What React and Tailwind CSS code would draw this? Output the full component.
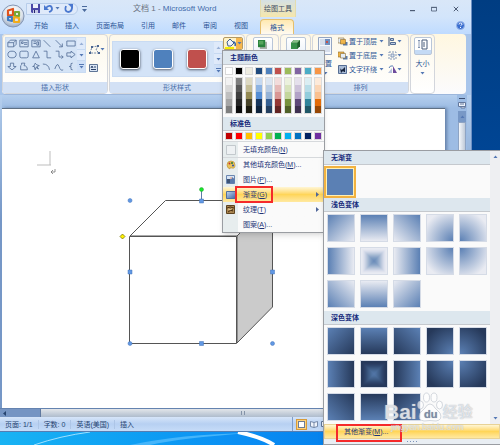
import React, { useState } from "react";
import clsx from "clsx";

const TABS = ["开始", "插入", "页面布局", "引用", "邮件", "审阅", "视图"];

// Base color followed by its five tints / shades
const THEME_COLORS = [
  ["#ffffff", "#f2f2f2", "#d8d8d8", "#bfbfbf", "#a5a5a5", "#7f7f7f"],
  ["#000000", "#7f7f7f", "#595959", "#3f3f3f", "#262626", "#0c0c0c"],
  ["#eeece1", "#ddd9c3", "#c4bd97", "#938953", "#494429", "#1d1b10"],
  ["#1f497d", "#c6d9f0", "#8db3e2", "#548dd4", "#17365d", "#0f243e"],
  ["#4f81bd", "#dbe5f1", "#b8cce4", "#95b3d7", "#366092", "#244061"],
  ["#c0504d", "#f2dcdb", "#e5b9b7", "#d99694", "#953734", "#632423"],
  ["#9bbb59", "#ebf1dd", "#d7e3bc", "#c3d69b", "#76923c", "#4f6128"],
  ["#8064a2", "#e5e0ec", "#ccc1d9", "#b2a2c7", "#5f497a", "#3f3151"],
  ["#4bacc6", "#dbeef3", "#b7dde8", "#92cddc", "#31859b", "#205867"],
  ["#f79646", "#fdeada", "#fbd5b5", "#fac08f", "#e36c09", "#974806"],
];

const STANDARD_COLORS = [
  "#c00000", "#ff0000", "#ffc000", "#ffff00", "#92d050",
  "#00b050", "#00b0f0", "#0070c0", "#002060", "#7030a0",
];

const LINEAR = [
  "bg-[linear-gradient(to_bottom_right,#5b80b4,var(--end))]",
  "bg-[linear-gradient(to_bottom,#5b80b4,var(--end))]",
  "bg-[linear-gradient(to_bottom_left,#5b80b4,var(--end))]",
  "bg-[linear-gradient(to_right,#5b80b4,var(--end))]",
  "center",
  "bg-[linear-gradient(to_left,#5b80b4,var(--end))]",
  "bg-[linear-gradient(to_top_right,#5b80b4,var(--end))]",
  "bg-[linear-gradient(to_top,#5b80b4,var(--end))]",
  "bg-[linear-gradient(to_top_left,#5b80b4,var(--end))]",
];

const CORNERS = [
  "bg-[radial-gradient(circle_at_bottom_right,#5b80b4,var(--end)_85%)]",
  "bg-[radial-gradient(circle_at_bottom_left,#5b80b4,var(--end)_85%)]",
  "bg-[radial-gradient(circle_at_top_right,#5b80b4,var(--end)_85%)]",
  "bg-[radial-gradient(circle_at_top_left,#5b80b4,var(--end)_85%)]",
];

function Caret({ className }) {
  return (
    <svg viewBox="0 0 5 3" className={clsx("h-[3px] w-[5px] shrink-0", className)}>
      <path d="M.5 0h4L2.5 2.5z" fill="#5478b4" />
    </svg>
  );
}

function OfficeButton() {
  return (
    <button aria-label="Office" className="mt-1 ml-px size-6 shrink-0">
      <svg viewBox="0 0 24 24" className="size-6">
        <defs>
          <radialGradient id="orb" cx="50%" cy="30%" r="75%">
            <stop offset="0" stopColor="#ffffff" />
            <stop offset=".6" stopColor="#dbe2ea" />
            <stop offset="1" stopColor="#8c9db8" />
          </radialGradient>
        </defs>
        <circle cx="12" cy="12" r="11" fill="url(#orb)" stroke="#8395b3" />
        <g fill="none" strokeWidth="2.2" strokeLinejoin="round">
          <path d="M7 6.500l5-1.500v6l-5 .5z" stroke="#e0531c" />
          <path d="M14 8h4v4h-4z" stroke="#77a833" />
          <path d="M7 13h4v4l-4-1z" stroke="#3f7ac0" />
          <path d="M13 13l5 1v4h-5z" stroke="#f1ac1b" />
        </g>
      </svg>
    </button>
  );
}

function QuickAccess() {
  return (
    <div className="flex h-3 w-[52px] items-center gap-1 rounded-r-full border border-[#b7cdea] bg-[#dfeafa] pl-1">
      <button aria-label="保存">
        <svg viewBox="0 0 9 9" className="size-[9px]">
          <path d="M0 0h9v9H1L0 8z" fill="#4b49a8" />
          <path d="M2 0h5v4H2z" fill="#eef2fb" />
          <path d="M2 6h5v3H2z" fill="#c5c9e6" />
          <path d="M3 6h1v3H3z" fill="#25256c" />
        </svg>
      </button>
      <button aria-label="撤消" className="flex items-center gap-[2px]">
        <svg viewBox="0 0 9 9" className="size-[9px]">
          <path d="M2 4c2-3 6-3 6 1q0 2-3 3" fill="none" stroke="#4a78cf" strokeWidth="1.8" />
          <path d="M0 1v5h5z" fill="#4a78cf" />
        </svg>
        <Caret />
      </button>
      <button aria-label="恢复">
        <svg viewBox="0 0 9 9" className="size-[9px]">
          <path d="M2 2q-2 5 2 6q4 0 4-5" fill="none" stroke="#4a78cf" strokeWidth="1.8" />
          <path d="M4 0h5v5z" fill="#4a78cf" />
        </svg>
      </button>
    </div>
  );
}

function Header() {
  return (
    <header className="flex h-[34px] bg-linear-to-b from-[#d9e7f8] via-[#d3e5fb] to-[#bfdbff]">
      <OfficeButton />
      <div className="flex min-w-0 flex-1 flex-col pl-px">
        <div className="flex h-[17px] items-center">
          <QuickAccess />
          <button aria-label="自定义快速访问工具栏" className="ml-1">
            <svg viewBox="0 0 5 6" className="h-[6px] w-[5px]">
              <path d="M0 0h5v1H0zM0 3h5L2.5 6z" fill="#4b6a9c" />
            </svg>
          </button>
          <h1 className="ml-[46px] w-[127px] text-[8px] leading-none font-normal whitespace-nowrap text-[#3f6aaa]">
            <span className="text-[#6b7280]">文档 1 - </span>Microsoft Word
          </h1>
          <div className="flex h-full w-9 items-center justify-center border-x border-[#e3dcae] bg-linear-to-b from-[#d5e0e4] to-[#f6e7ab] text-[#3e4c64]">
            绘图工具
          </div>
          <div className="ml-auto flex items-center gap-4 pr-3 text-[#4d5c75]">
            <button aria-label="最小化">
              <svg viewBox="0 0 5 6" className="h-[6px] w-[5px]"><path d="M0 4h5v1.2H0z" fill="currentColor" /></svg>
            </button>
            <button aria-label="最大化">
              <svg viewBox="0 0 6 6" className="size-[6px]"><path d="M.5 1.500h5v3.500h-5zM0 1.300h6" fill="none" stroke="currentColor" strokeWidth=".8" /></svg>
            </button>
            <button aria-label="关闭">
              <svg viewBox="0 0 6 6" className="size-[6px]"><path d="M.8.8l4.400 4.400M5.200.8L.8 5.200" stroke="currentColor" /></svg>
            </button>
          </div>
        </div>
        <nav className="flex flex-1 gap-px text-[#2c5596]">
          {TABS.map((tab) => (
            <button key={tab} className="px-2 whitespace-nowrap">
              {tab}
            </button>
          ))}
          <button className="mt-[2px] ml-[3px] rounded-t-sm border border-b-0 border-[#e6bf6c] bg-linear-to-b from-[#ffe9b0] to-[#fffaf0] px-[9px]">
            格式
          </button>
          <button aria-label="帮助" className="mr-[6px] ml-auto">
            <svg viewBox="0 0 9 9" className="size-[9px]">
              <circle cx="4.500" cy="4.500" r="4" fill="#3a6ed0" stroke="#9ab6e8" />
              <path d="M3 3.500q0-1.500 1.500-1.500t1.500 1.200q0 .8-1.500 1.500M4.500 6v1" fill="none" stroke="#fff" />
            </svg>
          </button>
        </nav>
      </div>
    </header>
  );
}

const SHAPES = [
  "M1 4l3-3h7v5l-3 3H1zM1 4h7v5M8 4l3-3",
  "M1 1h10v8H1zM3 3h2v2H3zM6 6h4M6 4h4",
  "M1 1h10v8H1zM7 3h2v4H7zM3 3h3M3 5h3",
  "M2 1l8 8",
  "M2 1l8 8M10 5v4H6",
  "M1 2h10v6H1z",
  "M1 5a5 4 0 0 1 10 0a5 4 0 0 1-10 0z",
  "M3 1h6q2 0 2 2v4q0 2-2 2H3q-2 0-2-2V3q0-2 2-2z",
  "M6 1l4 8H2z",
  "M2 1h4v8h5",
  "M2 1h4v7h5M9 6l2 2-2 2",
  "M1 3h5V1l5 4-5 4V7H1z",
  "M4 1h4v4h3L6 9 1 5h3z",
  "M2 9V4q2-1 1-3h4L6 4q4 0 4 5z",
  "M5 1l2 2 3 1-3 1 2 3-3-2-1 3-1-4H2l2-1z",
  "M1 2q7 0 8 7",
  "M1 8q3-9 5-3t5 4",
  "M8 1q-3 0-2 2t-2 2q3 0 2 2t2 2",
];

function GalleryScroll() {
  return (
    <div className="flex w-2 shrink-0 flex-col divide-y divide-[#c6d9f1] bg-[#dfeafa]">
      <button aria-label="上一行" className="flex flex-1 items-center justify-center">
        <Caret className="rotate-180 opacity-50" />
      </button>
      <button aria-label="下一行" className="flex flex-1 items-center justify-center">
        <Caret />
      </button>
      <button aria-label="其他" className="flex flex-1 flex-col items-center justify-center gap-px bg-[#cfe0f7]">
        <span className="h-px w-[5px] bg-[#5478b4]" />
        <Caret />
      </button>
    </div>
  );
}

function Group({ label, className, children }) {
  return (
    <section
      className={clsx(
        "flex shrink-0 flex-col rounded-sm border border-[#d3d6dc] bg-linear-to-b from-[#fdf8ea] to-white",
        className
      )}
    >
      <div className="flex min-h-0 flex-1">{children}</div>
      {label && (
        <h2 className="flex h-[11px] items-center justify-center bg-[#d3e1f5] font-normal text-[#476ca8]">
          {label}
        </h2>
      )}
    </section>
  );
}

function Layers({ front, back }) {
  return (
    <svg viewBox="0 0 10 9" className="h-[9px] w-[10px]">
      <path d="M0 1h6v5H0z" fill={back} stroke="#8b6a2b" strokeWidth=".6" />
      <path d="M5 5h4.500v3.500H5z" fill="#5b7cab" />
      <path d="M2.500 2.500h5v4.500h-5z" fill={front} stroke="#8b6a2b" strokeWidth=".6" />
    </svg>
  );
}

function Ribbon({ open, onToggle }) {
  return (
    <div className="mr-[5px] ml-[2px] flex h-[61px] gap-px rounded-sm border-b border-[#9db7dc] bg-linear-to-b from-[#fff7e0] to-[#fbfbfd]">
      <Group label="插入形状" className="w-[106px]">
        <div className="mt-[2px] ml-[2px] flex h-9 border border-[#c9dbf2] bg-[#d5e4f6]">
          <div className="grid w-[71px] grid-cols-6 place-items-center">
            {SHAPES.map((d, i) => (
              <button key={i} aria-label={`形状 ${i + 1}`}>
                <svg viewBox="0 0 12 10" className="h-[9px] w-[10px]">
                  <path d={d} fill="none" stroke="#546f97" strokeWidth="1" />
                </svg>
              </button>
            ))}
          </div>
          <GalleryScroll />
        </div>
        <div className="ml-[3px] flex flex-col gap-[10px] pt-[10px]">
          <button aria-label="编辑形状" className="flex items-center">
            <svg viewBox="0 0 11 9" className="h-[9px] w-[11px]">
              <path d="M1 8l2-6 6-1-2 4 3 3z" fill="none" stroke="#6f86a9" strokeDasharray="2 1" />
              <path d="M2 1h2v2H2zM8 0h2v2H8zM0 7h2v2H0zM9 7h2v2H9z" fill="#4a6591" />
            </svg>
            <Caret />
          </button>
          <button aria-label="文本框">
            <svg viewBox="0 0 9 8" className="h-2 w-[9px]">
              <path d="M.5.5h8v7h-8z" fill="#dbe6f5" stroke="#5f7596" />
              <path d="M2 4l1-2 1 2M5 3h2M2 5.500h5" stroke="#2b4168" fill="none" />
            </svg>
          </button>
        </div>
      </Group>

      <Group label="形状样式" className="w-[136px]">
        <div className="mt-[6px] ml-[2px] flex h-[36px] border border-[#c9dbf2] bg-[#d3e3f7]">
          <div className="flex w-[101px] items-center justify-around">
            <button aria-label="黑色样式" className="size-5 rounded-[3px] border border-white bg-black shadow-sm shadow-gray-600" />
            <button aria-label="蓝色样式" className="size-5 rounded-[3px] border border-white bg-[#4f81bd] shadow-sm shadow-gray-500" />
            <button aria-label="红色样式" className="size-5 rounded-[3px] border border-white bg-[#c0504d] shadow-sm shadow-gray-500" />
          </div>
          <GalleryScroll />
        </div>
        <div className="relative pt-[2px]">
          <button
            aria-label="形状填充"
            aria-expanded={open}
            onClick={onToggle}
            className="flex h-[13px] w-5 overflow-hidden rounded-[2px] border border-[#b49a63] bg-[#fff2c4]"
          >
            <svg viewBox="0 0 12 11" className="h-[11px] w-3">
              <path d="M3 4l3-3 4 4-3 3H4z" fill="#eff3fa" stroke="#44618f" />
              <path d="M9 4q3 0 2 4" fill="none" stroke="#2e5ba6" strokeWidth="1.5" />
              <path d="M1 9h9v2H1z" fill="#f5ee00" />
            </svg>
            <span className="flex h-full flex-1 items-center justify-center bg-[#f7b64c]">
              <Caret />
            </span>
          </button>
          {open && <FillMenu />}
        </div>
      </Group>

      <Group label=" " className="w-[33px]">
        <button aria-label="阴影效果" className="mx-auto mt-[2px] flex h-6 w-5 items-start justify-center rounded-[2px] border border-[#b9c6d8] bg-linear-to-b from-white to-[#e5edf7] pt-[2px]">
          <svg viewBox="0 0 10 10" className="size-[9px]">
            <path d="M2 2h8v8H2z" fill="#a6b0a6" />
            <path d="M0 0h8v8H0z" fill="#28823c" />
            <path d="M1 1h5v4H1z" fill="#55a55c" />
          </svg>
        </button>
      </Group>
      <Group label=" " className="w-[31px]">
        <button aria-label="三维效果" className="mx-auto mt-[2px] flex h-6 w-5 items-start justify-center rounded-[2px] border border-[#b9c6d8] bg-linear-to-b from-white to-[#e5edf7] pt-[2px]">
          <svg viewBox="0 0 10 10" className="size-[9px]">
            <path d="M0 3l3-3h7v7l-3 3H0z" fill="#1d5f2a" />
            <path d="M0 3h7v7H0z" fill="#37904a" />
            <path d="M0 3l3-3h7L7 3z" fill="#88bf8a" />
          </svg>
        </button>
      </Group>

      <Group label="排列" className="w-[97px]">
        <button className="ml-[5px] flex flex-col items-center pt-[2px] text-[#2c5596]">
          <svg viewBox="0 0 14 18" className="h-[18px] w-[14px]">
            <path d="M.5.5h13v17H.5z" fill="#f4f7fc" stroke="#94a6c4" />
            <path d="M2 3h5M2 5h5M2 7h5M2 10h10M2 12h10M2 14h10" stroke="#b8c4da" />
            <path d="M7 2h5v6H7z" fill="#6e8fc0" />
            <path d="M8 4h2v2H8z" fill="#c6524a" />
          </svg>
          <span className="mt-1">位置</span>
          <Caret className="mt-1" />
        </button>
        <div className="ml-[6px] flex flex-col justify-around pb-[6px] text-[#2c5596]">
          <button className="flex items-center gap-px whitespace-nowrap">
            <Layers front="#f0b549" back="#e3edf8" />
            置于顶层
            <Caret className="ml-px" />
          </button>
          <button className="flex items-center gap-px whitespace-nowrap">
            <Layers front="#e3edf8" back="#f0b549" />
            置于底层
            <Caret className="ml-px" />
          </button>
          <button className="flex items-center gap-px whitespace-nowrap">
            <svg viewBox="0 0 10 9" className="h-[9px] w-[10px]">
              <path d="M.5.5h8v8h-8z" fill="#a9bbd5" stroke="#566e94" />
              <path d="M2 3q1 3 3 1l2-2v5H6L5 6 3 8z" fill="#18243d" />
            </svg>
            文字环绕
            <Caret className="ml-px" />
          </button>
        </div>
        <div className="ml-1 flex flex-col justify-around pb-[6px]">
          <button aria-label="对齐" className="flex items-center">
            <svg viewBox="0 0 9 9" className="size-[9px]">
              <path d="M1 0v9" stroke="#39527b" />
              <path d="M2.500 1.500h3v2h-3zM2.500 5.500h5v2h-5z" fill="#c0cee3" stroke="#526b93" />
            </svg>
            <Caret />
          </button>
          <button aria-label="组合" className="flex items-center">
            <svg viewBox="0 0 9 9" className="size-[9px]">
              <path d="M1 1h7v7H1z" fill="none" stroke="#8398b8" strokeDasharray="2 1" />
              <path d="M3 3h3v3H3z" fill="#dce5f2" stroke="#8398b8" />
            </svg>
            <Caret />
          </button>
          <button aria-label="旋转" className="flex items-center">
            <svg viewBox="0 0 9 9" className="size-[9px]">
              <path d="M0 8l4-5v5z" fill="#b9c4de" />
              <path d="M5 8V1l4 7z" fill="#6d4a9c" />
              <path d="M1 3q1-3 4-2" fill="none" stroke="#597fb5" />
            </svg>
            <Caret />
          </button>
        </div>
      </Group>

      <Group className="w-[25px]">
        <button className="flex w-full flex-col items-center self-start pt-[2px] text-[#2c5596]">
          <span className="flex h-[18px] w-[18px] flex-col items-center rounded-[2px] border border-[#b9c6d8] bg-linear-to-b from-white from-75% to-[#c4daf5] to-75% pt-px">
            <svg viewBox="0 0 10 11" className="h-[11px] w-[10px]">
              <path d="M1 1v8M0 2l1-1 1 1M0 8l1 1 1-1" fill="none" stroke="#6e84a6" strokeWidth=".8" />
              <path d="M4 1h5v9H4zM6 3v5" fill="none" stroke="#495c7b" />
            </svg>
          </span>
          <span className="mt-1">大小</span>
          <Caret className="mt-1" />
        </button>
      </Group>
    </div>
  );
}

function MenuHeading({ children }) {
  return (
    <h3 className="flex h-[14px] items-center border-b border-[#c5c9ce] bg-[#dde7ee] pl-[7px] font-bold text-[#14297a]">
      {children}
    </h3>
  );
}

const ICONS = {
  none: <path d="M.5.5h9v9h-9z" fill="#eef1f3" stroke="#c3c9cd" />,
  palette: (
    <>
      <path d="M1 5q0-4 4-4t4 4-3 3-2 1q-3-1-3-4z" fill="#e8c45c" stroke="#b98d30" strokeWidth=".6" />
      <circle cx="3.500" cy="3.500" r="1" fill="#c92d2d" />
      <circle cx="6" cy="3" r="1" fill="#2a7a36" />
      <circle cx="7" cy="5.500" r="1" fill="#2c4fb0" />
    </>
  ),
  picture: (
    <>
      <path d="M.5.5h8v8h-8z" fill="#d6e4f5" stroke="#6b86b0" />
      <path d="M1 8l5-6 2.500 2v4.500z" fill="#5a79ac" />
      <path d="M1 4h3v4H1z" fill="#3d5375" />
      <circle cx="5" cy="3" r="1" fill="#eeb9a6" />
    </>
  ),
  gradient: (
    <>
      <linearGradient id="grad" x2="1" y2="1">
        <stop stopColor="#c4d6ee" />
        <stop offset="1" stopColor="#3c64a4" />
      </linearGradient>
      <path d="M.5 1.500h9v7h-9z" fill="url(#grad)" stroke="#51709f" />
    </>
  ),
  texture: (
    <>
      <path d="M.5.5h8v8h-8z" fill="#a98550" stroke="#5e4421" />
      <path d="M1 3q3-2 7 0M2 7q3-3 5-1M4 4l3 1" fill="none" stroke="#4a3013" />
      <path d="M2 4q2 1 4 0" fill="none" stroke="#ead09a" />
    </>
  ),
};

const FILL_ITEMS = [
  { icon: "palette", text: "其他填充颜色", hotkey: "M", dots: true },
  { icon: "picture", text: "图片", hotkey: "P", dots: true },
  { icon: "gradient", text: "渐变", hotkey: "G", arrow: true, active: true },
  { icon: "texture", text: "纹理", hotkey: "T", arrow: true },
  { text: "图案", hotkey: "A", dots: true },
];

function MenuItem({ icon, text, hotkey, dots, arrow, active }) {
  return (
    <button
      className={clsx(
        "relative flex h-[15px] w-full items-center text-left",
        active && "bg-linear-to-b from-[#fff6d4] via-[#ffd558] to-[#ffe9a0]"
      )}
    >
      <span className="flex w-[15px] justify-center">
        {icon && <svg viewBox="0 0 10 10" className="size-[10px]">{ICONS[icon]}</svg>}
      </span>
      <span className="pl-[5px] whitespace-nowrap">
        {text}(<u>{hotkey}</u>){dots && "..."}
      </span>
      {arrow && (
        <svg viewBox="0 0 3 5" className="mr-[5px] ml-auto h-[5px] w-[3px]">
          <path d="M0 0v5l3-2.500z" fill="#4f6699" />
        </svg>
      )}
      {active && (
        <span className="absolute -top-px left-3 h-[17px] w-[38px] border-2 border-[#f52a2a]" />
      )}
    </button>
  );
}

function FillMenu() {
  return (
    <div className="absolute top-[15px] -left-px z-10 w-[103px] border border-[#9a9da2] bg-[#fafafa] text-[#1e3578] shadow-md">
      <MenuHeading>主题颜色</MenuHeading>
      <div className="flex justify-between px-[2px] pt-[2px] pb-[3px]">
        {THEME_COLORS.map(([base, ...tints]) => (
          <div key={base} className="flex flex-col gap-[2px]">
            <button
              aria-label={base}
              className="size-2 border border-[#d8d8d8]"
              style={{ backgroundColor: base }}
            />
            <div className="flex flex-col border border-[#dcdcdc]">
              {tints.map((c) => (
                <button key={c} aria-label={c} className="h-[7px] w-[6px]" style={{ backgroundColor: c }} />
              ))}
            </div>
          </div>
        ))}
      </div>
      <MenuHeading>标准色</MenuHeading>
      <div className="flex justify-between px-[2px] py-px">
        {STANDARD_COLORS.map((c) => (
          <button key={c} aria-label={c} className="size-2 border border-[#d8d8d8]" style={{ backgroundColor: c }} />
        ))}
      </div>
      <div className="border-t border-[#d6d9dc] bg-linear-to-r from-[#e7edee] from-[15px] to-[#fafafa] to-[15px]">
        <MenuItem icon="none" text="无填充颜色" hotkey="N" />
        <div className="shadow-[inset_0_1px_#d6d9dc]">
          {FILL_ITEMS.map((item) => (
            <MenuItem key={item.text} {...item} />
          ))}
        </div>
      </div>
      <GradientMenu />
    </div>
  );
}

// Nested squares that build up color towards the middle
function CenterGradient() {
  const steps = [0, 1, 2, 3, 4, 5, 6, 7, 8, 9, 10, 11, 12, 13];
  return (
    <svg viewBox="0 0 28 28" className="size-full">
      <rect width="28" height="28" fill="var(--end)" />
      {steps.map((s) => (
        <rect key={s} x={s} y={s} width={28 - s * 2} height={28 - s * 2} fill="#5b80b4" opacity={s / 50} />
      ))}
    </svg>
  );
}

function Tile({ kind, label }) {
  return (
    <button
      aria-label={label}
      className={clsx("size-7 border border-[#d5dbe6]", kind !== "center" && kind)}
    >
      {kind === "center" && <CenterGradient />}
    </button>
  );
}

function Variants({ name, className }) {
  return (
    <div className={clsx("flex items-start gap-[5px] px-[3px] pt-[2px] pb-[3px]", className)}>
      <div className="grid grid-cols-3 gap-[5px]">
        {LINEAR.map((kind, i) => (
          <Tile key={kind} kind={kind} label={`${name} ${i + 1}`} />
        ))}
      </div>
      <div className="grid grid-cols-2 gap-[5px]">
        {CORNERS.map((kind, i) => (
          <Tile key={kind} kind={kind} label={`${name} ${i + 10}`} />
        ))}
      </div>
    </div>
  );
}

function Watermark() {
  return (
    <div className="pointer-events-none absolute bottom-[11px] left-[60px] text-white/65 text-shadow-[0_0_1px_#9aa3b0]">
      <div className="flex items-end">
        <span className="text-[21px] leading-[20px] font-bold">Bai</span>
        <svg viewBox="0 0 26 30" className="h-[30px] w-[26px]" fill="currentColor" stroke="#aab2be" strokeWidth=".5">
          <ellipse cx="3.500" cy="13" rx="3" ry="4" />
          <ellipse cx="9.500" cy="5.500" rx="3" ry="4.500" />
          <ellipse cx="17" cy="5.500" rx="3" ry="4.500" />
          <ellipse cx="22.500" cy="13" rx="3" ry="4" />
          <path d="M13 12q3 0 5 4l5 5q3 7-4 8-6-1-12 0-7-1-4-8l5-5q2-4 5-4z" />
          <text x="7" y="26" fontSize="11" fontWeight="bold" fill="#7d8ca5" stroke="none">du</text>
        </svg>
        <span className="text-[15px] leading-[20px] font-bold">经验</span>
      </div>
      <div className="pl-[7px] text-[9px] leading-[11px]">jingyan.baidu.com</div>
    </div>
  );
}

function GradientMenu() {
  return (
    <div className="absolute top-[99px] left-[100px] w-[178px] border border-[#9a9da2] bg-[#fafafa] shadow-md">
      <div className="flex">
        <div className="flex-1">
          <MenuHeading>无渐变</MenuHeading>
          <div className="h-[33px]">
            <button
              aria-label="无渐变"
              className="mt-px size-8 border-2 border-[#f2b240] bg-[#5b80b4] outline-1 -outline-offset-3 outline-[#fff0b5]"
            />
          </div>
          <MenuHeading>浅色变体</MenuHeading>
          <Variants name="浅色变体" className="[--end:#e9ebf2]" />
          <MenuHeading>深色变体</MenuHeading>
          <Variants name="深色变体" className="[--end:#26395a]" />
        </div>
        <div className="flex w-[10px] flex-col items-center justify-between bg-[#eeeff2] py-1">
          <Caret className="rotate-180" />
          <Caret />
        </div>
      </div>
      <button className="relative flex h-[15px] w-full items-center border border-[#e8d296] bg-linear-to-b from-[#fff6d4] via-[#ffd558] to-[#ffe9a0] pl-[19px]">
        <span>
          其他渐变(<u>M</u>)...
        </span>
        <span className="absolute -top-px left-[11px] h-[18px] w-[66px] border-2 border-[#f52a2a]" />
      </button>
      <div className="flex h-[5px] items-center justify-center gap-[2px] bg-[#e9eef3]">
        {[0, 1, 2, 3].map((i) => (
          <span key={i} className="size-px bg-[#7b93bb]" />
        ))}
      </div>
      <Watermark />
    </div>
  );
}

function Cube() {
  return (
    <svg viewBox="2 109 320 260" className="h-[260px] w-[320px]">
      <path d="M50 151v14M37 165h14" stroke="#bdbdbd" fill="none" />
      <path d="M55 169v3h-4M53 170l-2 2 2 2" stroke="#777" strokeWidth=".8" fill="none" />
      <g stroke="#555" strokeWidth="1">
        <path d="M130 236l35.500-35.500h107L237 236z" fill="#fff" />
        <path d="M237 236l35.500-35.500v106.500L237 343z" fill="#cbcbcb" />
        <path d="M129.500 236.500h107v107h-107z" fill="#fff" />
      </g>
      <path d="M201.500 190v10" stroke="#5b7ca8" />
      <circle cx="201.500" cy="189.500" r="2" fill="#17e52b" stroke="#28a233" strokeWidth=".5" />
      <g fill="#6198e4" stroke="#4574ba" strokeWidth=".5">
        <circle cx="130" cy="200.500" r="2" />
        <circle cx="130" cy="343.500" r="2" />
        <circle cx="272.500" cy="343.500" r="2" />
        <path d="M199.500 199h4v4h-4zM128 270h4v4h-4zM270.500 270h4v4h-4zM199.500 341.500h4v4h-4z" />
      </g>
      <path d="M122.500 234l2.500 2.500-2.500 2.500-2.500-2.500z" fill="#fff200" stroke="#6c6600" strokeWidth=".7" />
    </svg>
  );
}

function Workspace() {
  return (
    <main className="flex flex-1 bg-linear-to-b from-[#b5cfee] to-[#7698c8] to-40% pl-[2px]">
      <div className="flex flex-1 flex-col bg-linear-to-b from-[#b5cfee] to-[#9dbce4] to-[13px] pt-[13px]">
        <div className="mr-3 flex-1 border-t border-[#5f7084] bg-white shadow-[2px_0_3px_#6580a8]">
          <Cube />
        </div>
      </div>
      <div className="mr-1 flex w-[10px] flex-col items-center bg-[#9dbce4] pt-[3px]">
        <span className="h-px w-[6px] bg-[#3c4f72]" />
        <button aria-label="标尺" className="mt-[2px]">
          <svg viewBox="0 0 8 8" className="size-2">
            <path d="M.5 1.500h7v4h-7zM2 3h4M3 5v2h4V5" fill="#edf2fa" stroke="#64789c" />
          </svg>
        </button>
        <button aria-label="向上滚动" className="mt-[2px] flex h-[11px] w-2 items-center justify-center bg-[#7898c6]">
          <Caret className="rotate-180" />
        </button>
        <div className="w-2 flex-1 border border-[#8ea4c4] bg-linear-to-r from-[#f4f7fb] to-[#c0cad8]" />
      </div>
    </main>
  );
}

function StatusBar() {
  return (
    <footer>
      <div className="flex h-[9px] border-t border-[#6483b0] bg-[#7695c3] pr-[26px]">
        <button aria-label="向左滚动" className="flex w-10 items-center pl-[3px]">
          <svg viewBox="0 0 3 5" className="h-[5px] w-[3px]"><path d="M3 0v5L0 2.500z" fill="#27446f" /></svg>
        </button>
        <div className="flex flex-1 items-center justify-center border-l border-[#60799f] bg-linear-to-b from-[#e3e6ea] to-[#aebccd]">
          <span className="h-[4px] w-1 border-x border-[#8493a8]" />
        </div>
      </div>
      <div className="flex h-[15px] items-stretch border-b border-[#567db1] bg-linear-to-b from-[#d6e5f9] via-[#b7d0f2] to-[#c6dcf8] text-[#25436f]">
        <div className="flex items-center divide-x divide-[#adc5e6] whitespace-nowrap">
          <span className="px-[5px]">页面: 1/1</span>
          <span className="px-[5px]">字数: 0</span>
          <span className="px-[5px]">英语(美国)</span>
          <span className="px-[5px]">插入</span>
        </div>
        <div className="mr-[142px] ml-auto flex items-center gap-[3px] border-l border-[#7f9ecb] pl-[3px]">
          <button aria-label="页面视图" className="flex size-[11px] items-center justify-center border border-[#d69b3b] bg-[#ffd27a]">
            <span className="size-[7px] border border-[#6d7c95] bg-white" />
          </button>
          <button aria-label="阅读版式">
            <svg viewBox="0 0 8 7" className="h-[7px] w-2"><path d="M.5.5L4 1.500 7.500.5v5L4 6.500.5 5.500zM4 1.500v5" fill="#eef3fb" stroke="#5f7597" strokeWidth=".8" /></svg>
          </button>
          <button aria-label="Web 版式">
            <svg viewBox="0 0 8 7" className="h-[7px] w-2"><path d="M.5.5h6v5h-6z" fill="#eef3fb" stroke="#5f7597" /><circle cx="6" cy="5" r="2" fill="#2d8450" /></svg>
          </button>
        </div>
      </div>
    </footer>
  );
}

export default function App() {
  const [open, setOpen] = useState(true);

  return (
    <div className="flex min-h-screen flex-col overflow-hidden bg-linear-to-b from-[#003d82] to-[#0055b8] font-['Liberation_Sans','Noto_Sans_CJK_SC',sans-serif] text-[7px] leading-[9px]">
      <div className="mr-7 flex flex-1 flex-col border-r border-[#6e91c4] bg-[#a8c5eb]">
        <Header />
        <Ribbon open={open} onToggle={() => setOpen(!open)} />
        <Workspace />
        <StatusBar />
      </div>
      {/* Desktop wallpaper below the window */}
      <div className="h-[13px] overflow-hidden bg-linear-to-r from-[#19b3f3] via-[#0b8df3] to-[#006be0]">
        <svg viewBox="0 0 500 13" preserveAspectRatio="none" className="h-full w-full">
          <path d="M34 13Q60 4 90 0" fill="none" stroke="#9fe0ff" strokeWidth="1" />
          <path d="M130 13Q180 2 250 1Q180 6 150 13z" fill="#45b5fa" />
          <path d="M238 0Q262 5 274 13" fill="none" stroke="#fff" strokeWidth="4" />
        </svg>
      </div>
    </div>
  );
}
